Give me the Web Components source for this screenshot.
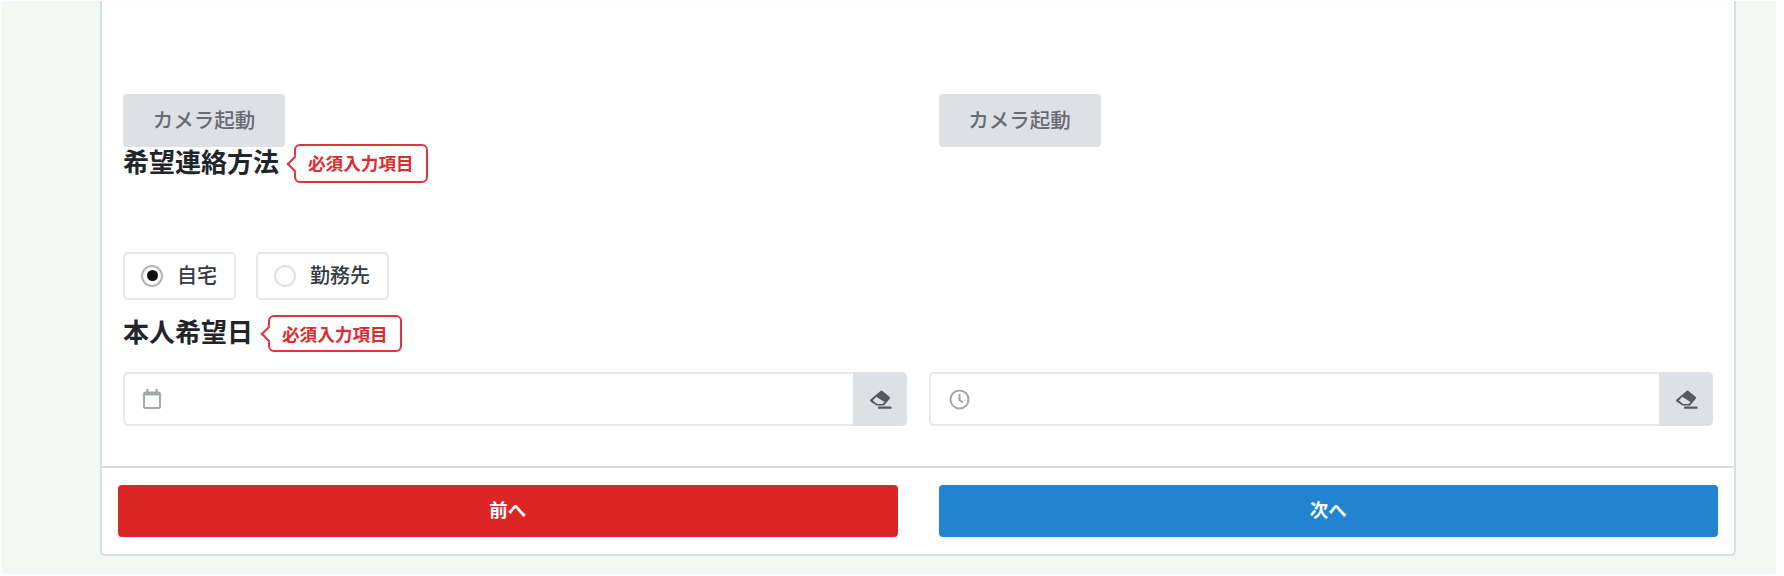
<!DOCTYPE html>
<html lang="ja">
<head>
<meta charset="utf-8">
<title>希望連絡方法</title>
<style>
    html, body {
        margin: 0;
        height: 576px;
        overflow: hidden;
        background: #fbfcfb;
        font-family: "Noto Sans CJK JP", "Noto Sans", sans-serif;
    }
</style>
</head>
<body>
<app-page>
    <form-card>
        <two-cols>
            <app-button variant="muted">カメラ起動</app-button>
            <app-button variant="muted">カメラ起動</app-button>
        </two-cols>
        <field-label style="margin-top:-3px">希望連絡方法</field-label>
        <radio-group style="margin-top:69px">
            <radio-chip checked>自宅</radio-chip>
            <radio-chip>勤務先</radio-chip>
        </radio-group>
        <field-label small style="margin-top:15px">本人希望日</field-label>
        <picker-row style="margin-top:20px">
            <picker-input icon="calendar"></picker-input>
            <picker-input icon="clock"></picker-input>
        </picker-row>
        <two-cols slot="footer">
            <app-button variant="danger">前へ</app-button>
            <app-button variant="primary">次へ</app-button>
        </two-cols>
    </form-card>
</app-page>

<script>
class AppPage extends HTMLElement {
    constructor() {
        super();
        this.attachShadow({ mode: 'open' });
    }

    connectedCallback() {
        this.shadowRoot.innerHTML = /*html*/ `
            <style>
                :host {
                    display: block;
                    box-sizing: border-box;
                    width: 1774px;
                    height: 573px;
                    margin: 1px 0 0 2px;
                    padding: 0 40px 18px 98px;
                    background: #f3f7f4;
                }
            </style>
            <slot></slot>
        `;
    }
}

class FormCard extends HTMLElement {
    constructor() {
        super();
        this.attachShadow({ mode: 'open' });
    }

    connectedCallback() {
        this.shadowRoot.innerHTML = /*html*/ `
            <style>
                :host {
                    display: flex;
                    flex-direction: column;
                    box-sizing: border-box;
                    height: 100%;
                    background: #fff;
                    border: 2px solid #d9dee1;
                    border-top: 0;
                    border-radius: 0 0 5px 5px;
                }

                .body {
                    flex: 1;
                    padding: 93px 21px 0;
                }

                .footer {
                    border-top: 2px solid #dadee1;
                    padding: 17px 16px;
                }
            </style>
            <div class="body"><slot></slot></div>
            <div class="footer"><slot name="footer"></slot></div>
        `;
    }
}

class TwoCols extends HTMLElement {
    constructor() {
        super();
        this.attachShadow({ mode: 'open' });
    }

    connectedCallback() {
        this.shadowRoot.innerHTML = /*html*/ `
            <style>
                :host {
                    display: grid;
                    grid-template-columns: 1fr 1fr;
                    column-gap: 41px;
                }
            </style>
            <slot></slot>
        `;
    }
}

class AppButton extends HTMLElement {
    constructor() {
        super();
        this.attachShadow({ mode: 'open' });
    }

    connectedCallback() {
        this.shadowRoot.innerHTML = /*html*/ `
            <style>
                :host {
                    display: block;
                }

                button {
                    display: block;
                    box-sizing: border-box;
                    width: 100%;
                    height: 52px;
                    border: 0;
                    border-radius: 4px;
                    padding: 0 0 4px;
                    font-family: inherit;
                    font-size: 18.5px;
                    font-weight: 700;
                    color: #fff;
                    cursor: pointer;
                }

                :host([variant="muted"]) button {
                    width: 162px;
                    height: 53px;
                    background: #dee1e4;
                    color: #666c72;
                    font-size: 20.5px;
                    font-weight: 500;
                }
                :host([variant="danger"]) button {
                    background: #dc2626;
                }
                :host([variant="primary"]) button {
                    background: #2084d0;
                }
            </style>
            <button type="button"><slot></slot></button>
        `;
    }
}

class FieldLabel extends HTMLElement {
    constructor() {
        super();
        this.attachShadow({ mode: 'open' });
    }

    connectedCallback() {
        this.shadowRoot.innerHTML = /*html*/ `
            <style>
                :host {
                    display: flex;
                    align-items: center;
                    height: 39px;
                }

                :host([small]) {
                    height: 37px;
                }

                .text {
                    font-size: 26px;
                    font-weight: 700;
                    line-height: 35px;
                    height: 37px;
                    margin-top: -4px;
                    color: #212529;
                }

                .badge {
                    position: relative;
                    box-sizing: border-box;
                    height: 100%;
                    margin-left: 15px;
                    padding: 0 12px;
                    background: #fff;
                    border: 2px solid #e0333c;
                    border-radius: 6px;
                    color: #dc2c30;
                    font-size: 17.6px;
                    font-weight: 700;
                    line-height: 33px;
                }

                .badge::before {
                    content: "";
                    position: absolute;
                    left: -7px;
                    top: 50%;
                    width: 10px;
                    height: 10px;
                    margin-top: -6px;
                    background: #fff;
                    border-left: 2px solid #e0333c;
                    border-bottom: 2px solid #e0333c;
                    transform: rotate(45deg);
                }
            </style>
            <span class="text"><slot></slot></span>
            <span class="badge">必須入力項目</span>
        `;
    }
}

class RadioGroup extends HTMLElement {
    constructor() {
        super();
        this.attachShadow({ mode: 'open' });
    }

    connectedCallback() {
        this.shadowRoot.innerHTML = /*html*/ `
            <style>
                :host {
                    display: flex;
                    gap: 20px;
                }
            </style>
            <slot></slot>
        `;
    }
}

class RadioChip extends HTMLElement {
    constructor() {
        super();
        this.attachShadow({ mode: 'open' });
    }

    connectedCallback() {
        this.shadowRoot.innerHTML = /*html*/ `
            <style>
                :host {
                    display: flex;
                    align-items: center;
                    box-sizing: border-box;
                    height: 48px;
                    padding: 0 17px 3px 16px;
                    gap: 14px;
                    border: 2px solid #e6e8ea;
                    border-radius: 5px;
                    background: #fff;
                    color: #343a40;
                    font-size: 20px;
                    font-weight: 500;
                }

                .dot {
                    display: flex;
                    align-items: center;
                    justify-content: center;
                    box-sizing: border-box;
                    width: 22px;
                    height: 22px;
                    margin-top: 2px;
                    border: 2px solid #dfe2e5;
                    border-radius: 50%;
                }

                :host([checked]) .dot {
                    border-color: #b5b5b5;
                }

                :host([checked]) .dot::after {
                    content: "";
                    width: 11px;
                    height: 11px;
                    border-radius: 50%;
                    background: #111;
                }
            </style>
            <span class="dot"></span>
            <slot></slot>
        `;
    }
}

class PickerRow extends HTMLElement {
    constructor() {
        super();
        this.attachShadow({ mode: 'open' });
    }

    connectedCallback() {
        this.shadowRoot.innerHTML = /*html*/ `
            <style>
                :host {
                    display: grid;
                    grid-template-columns: 1fr 1fr;
                    column-gap: 22px;
                }
            </style>
            <slot></slot>
        `;
    }
}

const PICKER_ICONS = {
    calendar: `<svg width="18" height="20" viewBox="0 0 18 20" fill="none" stroke="#a3a7ab" stroke-width="2">
        <rect x="1" y="3.5" width="16" height="15.5" rx="1.5"/>
        <path d="M1 5h16" stroke-width="3"/>
        <path d="M4.5 0v3M13.5 0v3" stroke-width="2.2"/>
    </svg>`,
    clock: `<svg width="21" height="21" viewBox="0 0 21 21" fill="none" stroke="#a3a7ab" stroke-width="2">
        <circle cx="10.5" cy="10.5" r="9"/>
        <path d="M10.5 5v6l3.5 2.4"/>
    </svg>`,
};

class PickerInput extends HTMLElement {
    constructor() {
        super();
        this.attachShadow({ mode: 'open' });
    }

    connectedCallback() {
        const icon = PICKER_ICONS[this.getAttribute('icon')] || '';
        this.shadowRoot.innerHTML = /*html*/ `
            <style>
                :host {
                    display: flex;
                    height: 54px;
                }

                .field {
                    flex: 1;
                    display: flex;
                    align-items: center;
                    box-sizing: border-box;
                    padding-left: 18px;
                    border: 2px solid #e6e8ea;
                    border-right: 0;
                    border-radius: 5px 0 0 5px;
                    background: #fff;
                }

                .clear {
                    display: flex;
                    align-items: center;
                    justify-content: center;
                    width: 54px;
                    background: #dee1e4;
                    border-radius: 0 5px 5px 0;
                }
            </style>
            <div class="field">${icon}</div>
            <div class="clear">
                <svg width="23" height="19" viewBox="0 0 23 19" fill="#55595e">
                    <path fill-rule="evenodd" d="M1.5 9.6 L11.5 1 a1.5 1.5 0 0 1 2 0 L20.5 6.7 a1.5 1.5 0 0 1 .2 2.1 L15 15.5 H7.6 L1.5 11.6 a1.3 1.3 0 0 1 0 -2 Z M7.2 6.8 L3.8 10.4 L8.2 14 H13.6 L15.6 11.9 Z"/>
                    <rect x="9" y="16.6" width="13.4" height="2.2" rx=".6"/>
                </svg>
            </div>
        `;
    }
}

customElements.define('app-page', AppPage);
customElements.define('form-card', FormCard);
customElements.define('two-cols', TwoCols);
customElements.define('app-button', AppButton);
customElements.define('field-label', FieldLabel);
customElements.define('radio-group', RadioGroup);
customElements.define('radio-chip', RadioChip);
customElements.define('picker-row', PickerRow);
customElements.define('picker-input', PickerInput);
</script>
</body>
</html>
